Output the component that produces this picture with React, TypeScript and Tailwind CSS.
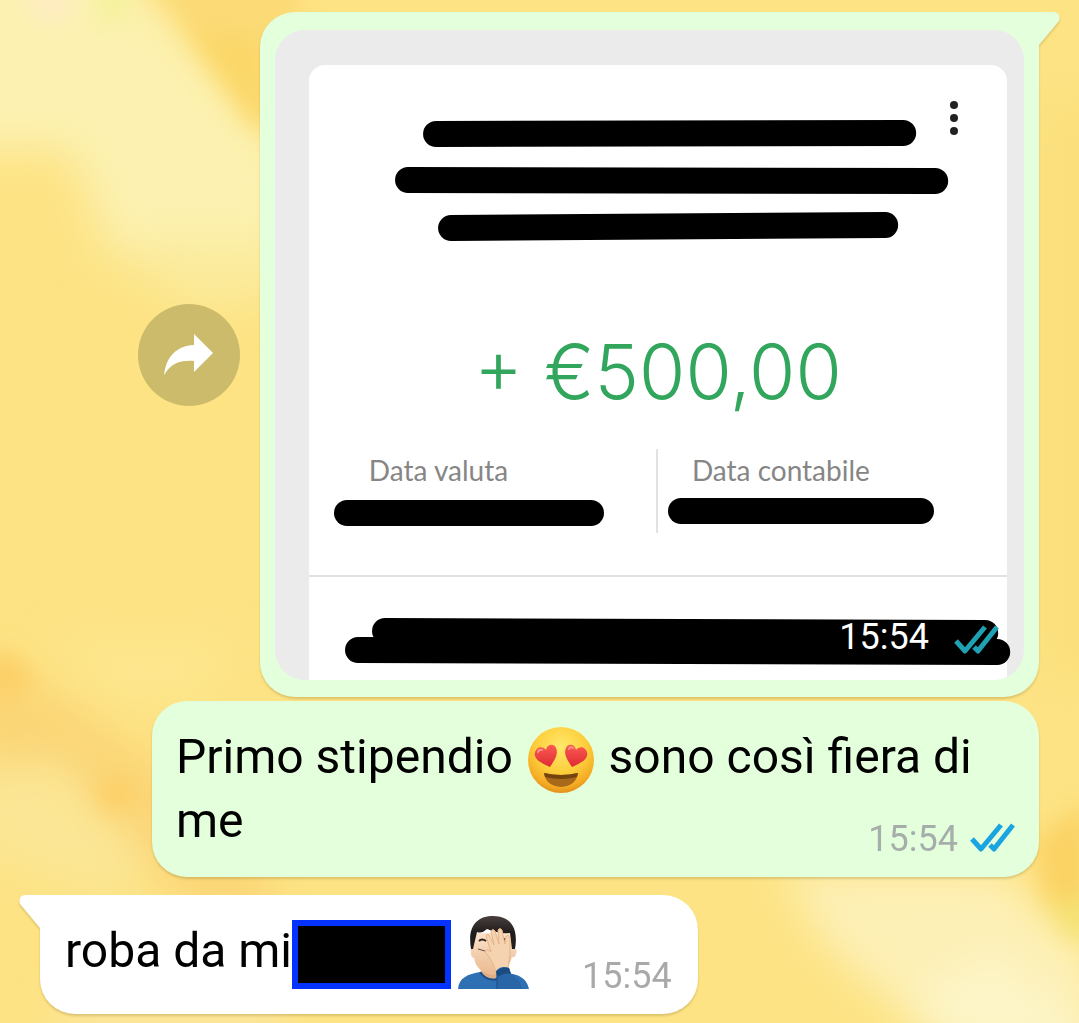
import React from 'react'
import type { ReactNode } from 'react'

type Line = [number, number, number, number]

function Wallpaper() {
  return (
    <svg className="absolute inset-0 -z-10 h-full w-full" viewBox="0 0 1079 1023" preserveAspectRatio="none" aria-hidden="true">
      <defs>
        <filter id="soft" x="-50%" y="-50%" width="200%" height="200%"><feGaussianBlur stdDeviation="20" /></filter>
        <filter id="mid" x="-50%" y="-50%" width="200%" height="200%"><feGaussianBlur stdDeviation="12" /></filter>
      </defs>
      <rect width="1079" height="1023" fill="#fde384" />
      <g filter="url(#soft)">
        <path d="M-60-60H100L290 150V290L110 250L70 150H-60Z" fill="#fcf1b0" />
        <path d="M80 240H300V290L200 310Z" fill="#fbeb9c" />
        <path d="M-40 660L50 690L180 780L290 900L220 920L90 830L-40 740Z" fill="#fbd576" />
        <path d="M60 640L230 640L200 700L100 700Z" fill="#fde68e" />
        <path d="M-30 770L60 760L150 860L120 900L-30 850Z" fill="#fbe695" />
        <path d="M780 870H1000L1100 960V1060H960L830 950Z" fill="#fdf0b6" />
        <path d="M900 1010L990 950L1120 1050H960Z" fill="#fdf5c8" />
        <path d="M60 1000H290V1060H60Z" fill="#fbe59a" />
        <path d="M1040 100H1120V680H1040Z" fill="#fbdf7c" />
      </g>
      <g filter="url(#mid)">
        <path d="M140-30H300V150L225 80Z" fill="#fcda76" />
        <path d="M185 30L262 40V140Z" fill="#fbd767" />
        <path d="M25-20H75L70 22H35Z" fill="#fdecc2" />
        <path d="M100-20H125V22H100Z" fill="#f3f299" />
        <path d="M-15 655H20L35 690L-10 700Z" fill="#fccf66" />
        <path d="M95 780H130V810H105Z" fill="#fdce62" />
        <path d="M1035 840L1090 800V905H1045Z" fill="#fbd263" />
        <path d="M1050 900H1095V935H1065Z" fill="#f3e272" />
      </g>
    </svg>
  )
}

// Marker strokes that hide the private parts of the receipt
function Marker({ width, height, lines, className }: { width: number; height: number; lines: Line[]; className: string }) {
  return (
    <svg viewBox={`0 0 ${width} ${height}`} className={`block overflow-visible ${className}`} stroke="#000" strokeWidth="26" strokeLinecap="round" aria-hidden="true">
      {lines.map(([x1, y1, x2, y2]) => (
        <line key={`${x1}-${y1}`} x1={x1} y1={y1} x2={x2} y2={y2} />
      ))}
    </svg>
  )
}

function Ticks({ className }: { className: string }) {
  return (
    <svg viewBox="0 0 45 29" className={`h-[29px] w-[45px] ${className}`} fill="none" stroke="currentColor" strokeWidth="5" strokeLinejoin="round" aria-hidden="true">
      <path d="M2 16L11 26L31 2" />
      <path d="M20 22L24 26L43 2" />
    </svg>
  )
}

function HeartEyes() {
  return (
    <svg viewBox="0 0 66 66" className="mx-[3px] -my-1 inline-block h-[66px] w-[66px] align-middle" role="img" aria-label="😍">
      <defs>
        <radialGradient id="face" cx=".5" cy=".3" r=".72">
          <stop offset="0" stopColor="#ffe96a" />
          <stop offset=".55" stopColor="#fdcd3b" />
          <stop offset=".85" stopColor="#f4a922" />
          <stop offset="1" stopColor="#de8a1c" />
        </radialGradient>
        <linearGradient id="heart" x1="0" y1="0" x2="0" y2="1">
          <stop offset="0" stopColor="#fb5a52" />
          <stop offset="1" stopColor="#df2b33" />
        </linearGradient>
      </defs>
      <circle cx="33" cy="33" r="33" fill="url(#face)" />
      <path d="M16 46Q33 50 50 46Q48 59 33 60Q18 59 16 46Z" fill="#a8691a" />
      <path d="M16 46Q33 50 50 46L49 50Q33 54 17 50Z" fill="#74440f" />
      <path d="M22 40C13 36 5 32 7 25C9 19 15 19 18 23C19 17 26 16 28 21C31 27 26 34 22 40Z" fill="url(#heart)" />
      <path d="M44 40C53 36 61 32 59 25C57 19 51 19 48 23C47 17 40 16 38 21C35 27 40 34 44 40Z" fill="url(#heart)" />
      <path d="M10 25Q11 22 14 23M41 22Q42 19 45 21" stroke="#ff938a" strokeWidth="2" fill="none" strokeLinecap="round" />
    </svg>
  )
}

function Facepalm() {
  return (
    <svg viewBox="0 0 71 73" className="block h-[73px] w-[71px]" role="img" aria-label="🤦🏻‍♂️">
      <defs>
        <linearGradient id="skin" x1="0" y1="0" x2="0" y2="1">
          <stop offset="0" stopColor="#fbe3cb" />
          <stop offset="1" stopColor="#eab98f" />
        </linearGradient>
        <linearGradient id="hair" x1="0" y1="0" x2="0" y2="1">
          <stop offset="0" stopColor="#4a403e" />
          <stop offset=".5" stopColor="#211c1d" />
        </linearGradient>
      </defs>
      <path d="M24 48H44V64L34 68L22 63Z" fill="#e2ad82" />
      <path d="M0 73C1 62 9 58 23 56Q30 65 40 62L47 57C62 58 69 63 71 73Z" fill="#2e70b4" />
      <path d="M22 56Q29 66 40 63" fill="none" stroke="#1f4f86" strokeWidth="2" />
      <path d="M13 17H56V33Q60 32 58 38Q57 42 54 41Q50 57 35 59Q19 57 16 42Q12 41 13 33Z" fill="url(#skin)" />
      <path d="M13 33C9 9 20 0 35 0C51 0 61 10 57 33H54L52 17Q40 18 29 13Q24 18 19 16L15 33Z" fill="url(#hair)" />
      <path d="M21 25Q24 22 28 25M43 24Q46 22 48 25" fill="none" stroke="#2b211d" strokeWidth="2" />
      <circle cx="46" cy="24" r="2" fill="#2b211d" />
      <path d="M20 33L27 35" stroke="#6b4a38" strokeWidth="1" />
      <path d="M27 36Q29 32 33 36L28 20Q29 17 31 19L36 29L33 15Q35 12 37 15L41 28L40 14Q42 11 44 14L47 28L48 20Q51 18 52 22L52 38Q51 46 50 53L38 57Q35 44 27 36Z" fill="#f5d2b0" stroke="#e6b48b" strokeWidth="1" strokeLinejoin="round" />
      <path d="M38 55Q43 49 51 52L53 58Q62 62 64 73H39Z" fill="#2866a8" />
      <path d="M38 56Q44 50 51 52L53 58Q46 56 40 61Z" fill="#1c4b80" />
      <path d="M39 61V73" stroke="#1d4f87" strokeWidth="1" />
    </svg>
  )
}

function Receipt() {
  return (
    <div className="relative overflow-hidden rounded-[30px] bg-[#ebebeb] pt-[35px] pr-[17px] pl-[34px]">
      <div className="relative rounded-t-[16px] bg-white pt-[50px] font-[Lato,sans-serif]">
        <Marker className="w-full" width={698} height={130} lines={[[127, 19, 594, 18], [99, 65, 626, 66], [142, 113, 576, 110]]} />
        <button aria-label="Altre opzioni" className="absolute top-[32px] right-[45px] flex flex-col items-center gap-[5px] p-1">
          <span className="h-2 w-2 rounded-full bg-[#222]" />
          <span className="h-2 w-2 rounded-full bg-[#222]" />
          <span className="h-2 w-2 rounded-full bg-[#222]" />
        </button>
        <p className="mt-[87px] text-center font-[Inter,sans-serif] text-[75px] leading-[80px] font-light text-[#31a65c]">+ €500,00</p>
        <div className="mt-[37px] grid h-[84px] grid-cols-[347fr_351fr] text-[28px] leading-[42px] text-[#868686]">
          <div>
            <p className="pl-[60px]">Data valuta</p>
            <Marker className="mt-[9px] ml-[25px] w-[270px]" width={270} height={26} lines={[[13, 13, 257, 13]]} />
          </div>
          <div className="border-l-2 border-[#e2e2e2]">
            <p className="pl-[34px]">Data contabile</p>
            <Marker className="mt-[7px] ml-[10px] w-[266px]" width={266} height={26} lines={[[13, 13, 253, 13]]} />
          </div>
        </div>
        <hr className="mt-[42px] border-t-2 border-[#e2e2e2]" />
        <Marker className="w-full" width={698} height={103} lines={[[76, 54, 676, 56], [49, 73, 688, 75]]} />
      </div>
      <div className="absolute right-[25px] bottom-[22px] flex items-center gap-[25px] text-[36px] leading-[42px] text-white">
        <time>15:54</time>
        <Ticks className="mt-1 text-[#20a0b3]" />
      </div>
    </div>
  )
}

function Bubble({ mine, tail, className, children }: { mine?: boolean; tail?: boolean; className: string; children: ReactNode }) {
  const color = mine ? 'bg-[#e4ffdb] text-[#e4ffdb]' : 'bg-white text-white'
  const corner = tail ? (mine ? 'rounded-tr-none' : 'rounded-tl-none') : ''
  return (
    <div className={`relative rounded-[35px] drop-shadow-[0_2px_1px_rgba(90,70,0,0.2)] ${color} ${corner} ${className}`}>
      {tail && (
        <svg viewBox="0 0 22 34" className={`absolute top-0 h-[34px] w-[22px] ${mine ? '-right-[21px]' : '-left-[21px] -scale-x-100'}`} fill="currentColor" aria-hidden="true">
          <path d="M0 0H16Q23 1 21 9L1 33H0Z" />
        </svg>
      )}
      <div className="text-black">{children}</div>
    </div>
  )
}

export default function App() {
  return (
    <main className="relative isolate flex min-h-screen flex-col overflow-hidden px-10 pt-3 pb-[9px] font-[Roboto,sans-serif] text-[48px] leading-[64px]">
      <Wallpaper />
      <div className="flex items-center justify-end gap-5">
        <button aria-label="Inoltra" className="flex h-[102px] w-[102px] items-center justify-center rounded-full bg-[#ccbb6b]">
          <svg viewBox="0 0 49 41" className="h-[41px] w-[49px]" fill="#fff" aria-hidden="true">
            <path d="M30 0L49 19L30 38V27C15 26 7 30 0 41C2 23 12 12 30 11Z" />
          </svg>
        </button>
        <Bubble mine tail className="w-[78%] px-[15px] pt-[18px] pb-[17px]">
          <Receipt />
        </Bubble>
      </div>

      <Bubble mine className="mt-1 w-[887px] max-w-full self-end px-6 pt-6 pb-[17px]">
        <div className="flow-root">
          Primo stipendio <HeartEyes /> sono così fiera di{' '}
          me
          <span className="float-right mt-[29px] flex items-center gap-3 text-[36px] leading-[42px] text-[#a6aeab]">
            <time>15:54</time>
            <Ticks className="mb-1 text-[#1ba5e0]" />
          </span>
        </div>
      </Bubble>

      <Bubble tail className="mt-[18px] max-w-full self-start pr-[26px] pl-[25px]">
        <div className="flex h-[119px] items-start">
          <p className="mt-6">roba da mi</p>
          <span className="mt-[25px] h-[69px] w-[159px] border-[6px] border-[#0433ff] bg-black" />
          <span className="mt-[21px] ml-[7px]"><Facepalm /></span>
          <time className="mt-[60px] ml-[53px] text-[36px] leading-[42px] text-[#a9a9a9]">15:54</time>
        </div>
      </Bubble>
    </main>
  )
}
